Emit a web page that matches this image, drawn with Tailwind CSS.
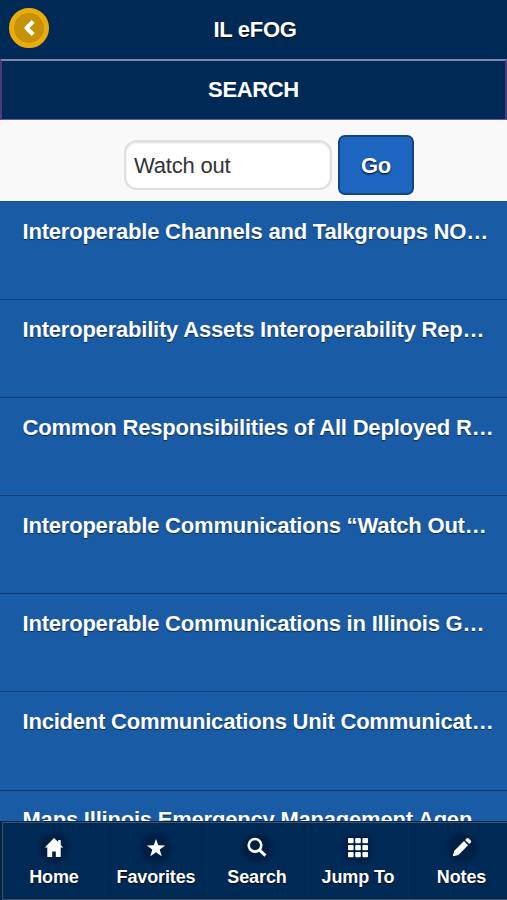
<!DOCTYPE html>
<html lang="en">
<head>
<meta charset="utf-8">
<title>IL eFOG</title>
<script src="https://cdn.jsdelivr.net/npm/@tailwindcss/browser@4"></script>
</head>
<body class="w-[507px] h-[900px] overflow-hidden flex flex-col bg-[#195ca5] font-['Liberation_Sans',Arial,sans-serif] text-white">
<header class="relative h-[59px] shrink-0 bg-[#002a56] flex items-center justify-center">
  <button class="absolute left-[9px] top-2 size-10 rounded-full bg-[#c69208] border-[5px] border-[#eaab0d] flex items-center justify-center" aria-label="Back">
    <svg class="size-[18px]" viewBox="0 0 18 18" fill="none" stroke="#fff" stroke-width="4.2" stroke-linejoin="round"><path d="M13.2 2.4 6.6 9l6.6 6.6"/></svg>
  </button>
  <h1 class="text-[22px] leading-6 font-bold pt-px pl-[3px] tracking-[-0.3px] [text-shadow:0_1px_1px_#000]">IL eFOG</h1>
</header>
<section class="h-[61px] shrink-0 bg-[#002a56] border-t-2 border-t-[#8583b0] border-x-2 border-x-[#513a7c] border-b border-b-[#66609a] flex items-center justify-center">
  <h2 class="text-[22px] leading-6 font-bold tracking-[-0.35px] pb-px">SEARCH</h2>
</section>
<form class="h-[81px] shrink-0 bg-[#f9f9f9] flex pl-[124px] pt-[15px] gap-[6px]">
  <div class="mt-[5px] w-[208px] h-[50px] rounded-[13px] border-2 border-[#dedede] bg-white shadow-[inset_0_1px_2px_#0002] text-[#333] text-[22px] leading-[47px] pl-[8px] tracking-[-0.2px]">Watch out</div>
  <button type="button" class="w-[76px] h-[60px] rounded-[7px] border-2 border-[#14457c] bg-[#1c66bf] text-[22px] font-bold pt-px tracking-[-0.3px] [text-shadow:0_1px_2px_#000]">Go</button>
</form>
<main class="h-[620px] shrink-0 overflow-hidden border-t border-[#15518f] text-[22px] leading-6 font-bold whitespace-nowrap tracking-[-0.205px] [text-shadow:0_1px_1px_#0a2850]">
  <div class="h-[98px] pl-[22.5px] pt-[18px] border-b border-[#0d3d74]">Interoperable Channels and Talkgroups NO…</div>
  <div class="h-[98px] pl-[22.5px] pt-[18px] border-b border-[#0d3d74]">Interoperability Assets Interoperability Rep…</div>
  <div class="h-[98px] pl-[22.5px] pt-[18px] border-b border-[#0d3d74]">Common Responsibilities of All Deployed R…</div>
  <div class="h-[98px] pl-[22.5px] pt-[18px] border-b border-[#0d3d74]">Interoperable Communications “Watch Out…</div>
  <div class="h-[98px] pl-[22.5px] pt-[18px] border-b border-[#0d3d74]">Interoperable Communications in Illinois G…</div>
  <div class="h-[99px] pl-[22.5px] pt-[18px] border-b border-[#0d3d74]">Incident Communications Unit Communicat…</div>
  <div class="h-[98px] pl-[22.5px] pt-[17px]">Maps Illinois Emergency Management Agen</div>
</main>
<nav class="h-[79px] shrink-0 bg-[#002a56] border-l-2 border-l-[#002247]">
  <div class="h-[78px] mt-px border border-r-0 border-[#46505c] grid grid-cols-[103px_101px_101px_101px_1fr] text-[18px] leading-5 font-bold text-center tracking-[-0.12px] [text-shadow:0_1px_1px_#000]">
    <a class="flex flex-col items-center pt-[13px] gap-[7px] border-r border-[#082f59]"><svg class="size-6 rounded-full bg-[#001f45] shadow-[0_0_4px_3px_#001f45]" viewBox="0 0 24 24" fill="#fff"><path d="M12 2 2.8 11.6h2.5V21h4.9v-5.5h3.6V21h4.9v-9.4h2.5l-2.5-2.7V4h-2.5v2.1z"/></svg><span>Home</span></a>
    <a class="flex flex-col items-center pt-[13px] gap-[7px] border-r border-[#082f59]"><svg class="size-6 rounded-full bg-[#001f45] shadow-[0_0_4px_3px_#001f45]" viewBox="0 0 24 24" fill="#fff"><path d="m12 3 2.3 6.2 6.9.2-5.5 4.2 2 6.6L12 16.3l-5.7 3.9 2-6.6-5.5-4.2 6.9-.2z"/></svg><span>Favorites</span></a>
    <a class="flex flex-col items-center pt-[13px] gap-[7px] border-r border-[#082f59]"><svg class="size-6 rounded-full bg-[#001f45] shadow-[0_0_4px_3px_#001f45]" viewBox="0 0 24 24" fill="none" stroke="#fff" stroke-width="2.6"><circle cx="10" cy="9.3" r="6.3"/><path d="m14.4 13.9 6 5.7" stroke-width="3"/></svg><span>Search</span></a>
    <a class="flex flex-col items-center pt-[13px] gap-[7px] border-r border-[#082f59]"><svg class="size-6 overflow-visible bg-[#001f45] rounded-[6px] shadow-[0_0_4px_1px_#001f45]" viewBox="0 0 24 24" fill="#fff"><rect x="2" y="2" width="5.6" height="5.2" rx=".9"/><rect x="9.2" y="2" width="5.6" height="5.2" rx=".9"/><rect x="16.4" y="2" width="5.6" height="5.2" rx=".9"/><rect x="2" y="9" width="5.6" height="5.2" rx=".9"/><rect x="9.2" y="9" width="5.6" height="5.2" rx=".9"/><rect x="16.4" y="9" width="5.6" height="5.2" rx=".9"/><rect x="2" y="16" width="5.6" height="5.2" rx=".9"/><rect x="9.2" y="16" width="5.6" height="5.2" rx=".9"/><rect x="16.4" y="16" width="5.6" height="5.2" rx=".9"/></svg><span>Jump To</span></a>
    <a class="flex flex-col items-center pt-[13px] gap-[7px] pl-[7px]"><svg class="size-6 rounded-full bg-[#001f45] shadow-[0_0_4px_3px_#001f45]" viewBox="0 0 24 24" fill="#fff"><path d="M2.5 20.5 4.3 14.8 14 5.1l4.1 4.1-9.7 9.7zM15.1 4l1.7-1.7q.8-.8 1.7 0l2.4 2.4q.8.8 0 1.7l-1.7 1.7z"/></svg><span>Notes</span></a>
  </div>
</nav>
</body>
</html>
